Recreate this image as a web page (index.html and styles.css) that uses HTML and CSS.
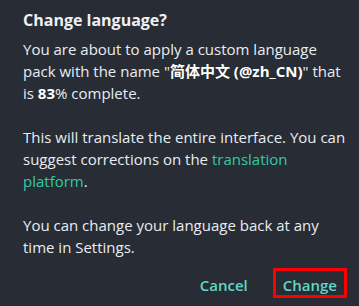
FILE: index.html
```html
<!DOCTYPE html>
<html>
<head>
<meta charset="utf-8">
<link rel="stylesheet" href="styles.css">
</head>
<body>
<div class="dialog">
  <h2 class="title">Change language?</h2>
  <p class="para">You are about to apply a custom language pack with the name "<b>简体中文 (@zh_CN)</b>" that is <b>83</b>% complete.</p>
  <p class="para">This will translate the entire interface. You can suggest corrections on the <a class="link" href="#">translation platform</a>.</p>
  <p class="para para-last">You can change your language back at any time in Settings.</p>
  <div class="actions">
    <button class="btn">Cancel</button>
    <button class="btn btn-primary">Change</button>
  </div>
</div>
</body>
</html>
```
FILE: styles.css
```css
html, body {
  margin: 0;
  padding: 0;
  background: #282c34;
}
.dialog {
  width: 359px;
  height: 306px;
  box-sizing: border-box;
  padding: 8px 12px 8px 23px;
  font-family: "Open Sans", sans-serif;
  color: #e8ecf2;
  display: flex;
  flex-direction: column;
}
.title {
  margin: 0 0 6px;
  font-size: 16px;
  line-height: 24px;
  font-weight: 700;
  color: #eef0f3;
}
.para {
  margin: 0 0 22px;
  font-size: 15px;
  line-height: 22px;
}
.para-last {
  margin-bottom: 0;
}
.para b {
  font-weight: 700;
  font-family: "Open Sans", "Noto Sans CJK SC", sans-serif;
  color: #ffffff;
}
.link {
  color: #34c9a4;
  text-decoration: none;
}
.actions {
  display: flex;
  justify-content: flex-end;
  gap: 15px;
  margin-top: auto;
}
.btn {
  background: none;
  border: 3px solid transparent;
  font-family: "Open Sans", sans-serif;
  font-size: 15px;
  font-weight: 600;
  line-height: 20px;
  color: #5fd8c8;
  padding: 4px 7px 0;
  height: 30px;
  box-sizing: border-box;
}
.btn-primary {
  border-color: #ff0000;
}
```
